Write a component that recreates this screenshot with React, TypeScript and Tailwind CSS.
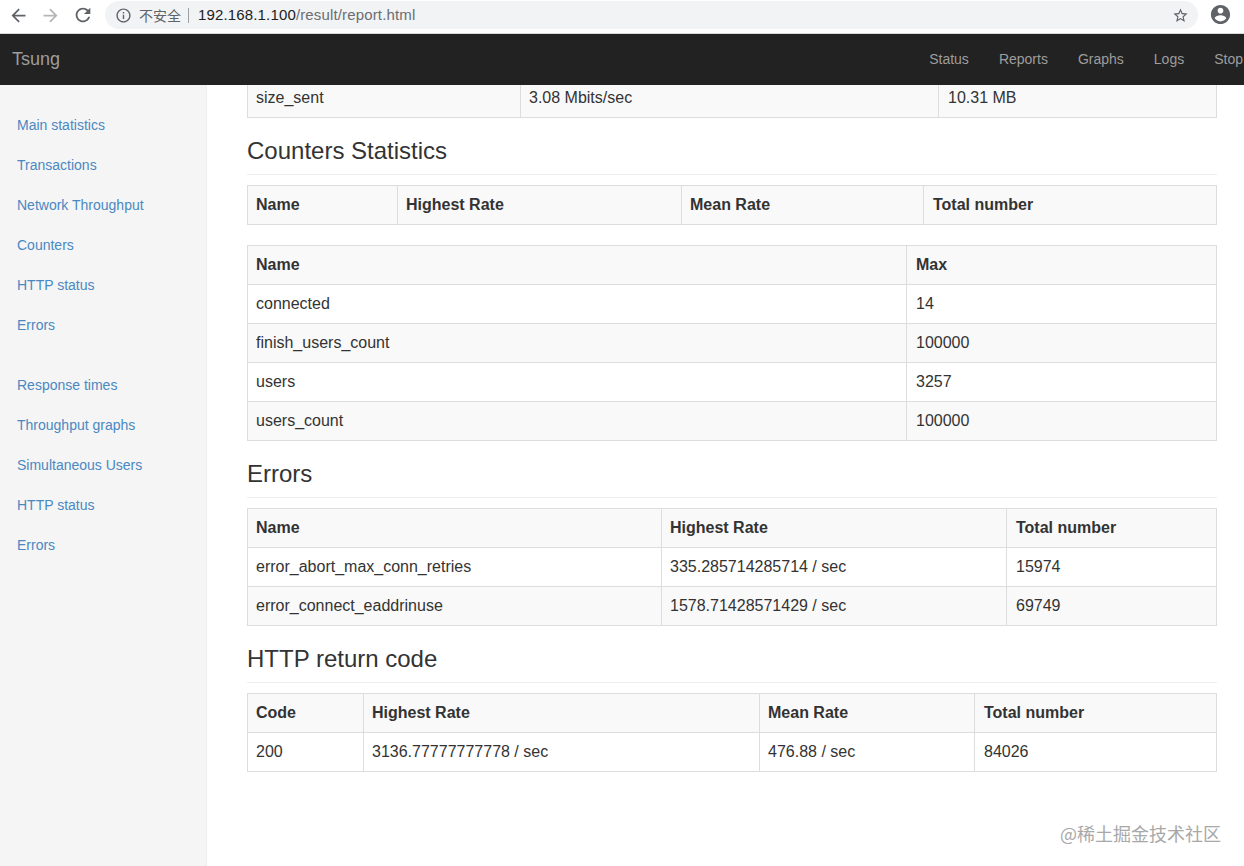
const FONT = "font-['Liberation_Sans',Arial,sans-serif]";

interface DataTableProps {
  cols: string[];
  rows: string[][];
  className?: string;
}

function Glyph({ d, className }: { d: string; className: string }) {
  return (
    <svg viewBox="0 0 24 24" className={className} fill="currentColor">
      <path d={d} />
    </svg>
  );
}

const ICONS = {
  back: 'M20 11H7.83l5.59-5.59L12 4l-8 8 8 8 1.41-1.41L7.83 13H20v-2z',
  forward: 'M12 4l-1.41 1.41L16.17 11H4v2h12.17l-5.58 5.59L12 20l8-8z',
  reload:
    'M17.65 6.35C16.2 4.9 14.21 4 12 4c-4.42 0-7.99 3.58-7.99 8s3.57 8 7.99 8c3.73 0 6.84-2.55 7.73-6h-2.08c-.82 2.33-3.04 4-5.65 4-3.31 0-6-2.69-6-6s2.69-6 6-6c1.66 0 3.14.69 4.22 1.78L13 11h7V4l-2.35 2.35z',
  info: 'M11 7h2v2h-2zm0 4h2v6h-2zm1-9C6.48 2 2 6.48 2 12s4.48 10 10 10 10-4.48 10-10S17.52 2 12 2zm0 18c-4.41 0-8-3.59-8-8s3.59-8 8-8 8 3.59 8 8-3.59 8-8 8z',
  star: 'M22 9.24l-7.19-.62L12 2 9.19 8.63 2 9.24l5.46 4.73L5.82 21 12 17.27 18.18 21l-1.63-7.03L22 9.24zM12 15.4l-3.76 2.27 1-4.28-3.32-2.88 4.38-.38L12 6.1l1.71 4.04 4.38.38-3.32 2.88 1 4.28L12 15.4z',
  account:
    'M12 2C6.48 2 2 6.48 2 12s4.48 10 10 10 10-4.48 10-10S17.52 2 12 2zm0 3c1.66 0 3 1.34 3 3s-1.34 3-3 3-3-1.34-3-3 1.34-3 3-3zm0 14.2c-2.5 0-4.71-1.28-6-3.22.03-1.99 4-3.08 6-3.08 1.99 0 5.97 1.09 6 3.08-1.29 1.94-3.5 3.22-6 3.22z',
};

function BrowserBar() {
  return (
    <div className="flex h-[34px] items-start bg-white border-b border-[#d8d8d8]">
      <div className="flex items-center h-[30px] w-[105px] text-[#5f6368]">
        <Glyph d={ICONS.back} className="ml-[8px] w-[21px] h-[21px]" />
        <Glyph d={ICONS.forward} className="ml-[11px] w-[21px] h-[21px] text-[#b4b6b9]" />
        <Glyph d={ICONS.reload} className="ml-[11px] w-[22px] h-[22px]" />
      </div>
      <div className="flex items-center h-[28px] mt-[1px] w-[1093px] rounded-full bg-[#f1f3f4]">
        <Glyph d={ICONS.info} className="ml-[10px] w-[17px] h-[17px] text-[#5f6368]" />
        <span className="ml-[7px] text-[14px] text-[#5f6368] font-['Noto_Sans_CJK_SC',sans-serif]">不安全</span>
        <span className="ml-[7px] h-[15px] w-px bg-[#9aa0a6]" />
        <span className="ml-[9px] text-[15px] tracking-[0.15px] text-[#6b6e72]">
          <span className="text-[#202124]">192.168.1.100</span>/result/report.html
        </span>
        <Glyph d={ICONS.star} className="ml-auto mr-[9px] w-[17px] h-[17px] text-[#5f6368]" />
      </div>
      <Glyph d={ICONS.account} className="ml-[11px] mt-[3px] w-[23px] h-[23px] text-[#5f6368]" />
    </div>
  );
}

function TopNav() {
  return (
    <div className="flex items-center h-[51px] bg-[#222] text-[#9d9d9d]">
      <span className="ml-[12px] text-[18px]">Tsung</span>
      <div className="ml-auto pr-[1px] flex gap-[30px] text-[14px]">
        <span>Status</span>
        <span>Reports</span>
        <span>Graphs</span>
        <span>Logs</span>
        <span>Stop</span>
      </div>
    </div>
  );
}

function Sidebar() {
  const first = ['Main statistics', 'Transactions', 'Network Throughput', 'Counters', 'HTTP status', 'Errors'];
  const second = ['Response times', 'Throughput graphs', 'Simultaneous Users', 'HTTP status', 'Errors'];
  return (
    <div className="w-[207px] shrink-0 bg-[#f5f5f5] border-r border-[#eee] pt-[20px] text-[14px] leading-[20px] text-[#4a88c2]">
      {first.map((s) => (
        <div key={s} className="px-[17px] py-[10px]">{s}</div>
      ))}
      <div className="h-[20px]" />
      {second.map((s) => (
        <div key={s} className="px-[17px] py-[10px]">{s}</div>
      ))}
    </div>
  );
}

function DataTable({ cols, rows, className = '' }: DataTableProps) {
  return (
    <table className={`w-[969px] table-fixed border-collapse text-[16px] leading-[22px] ${className}`}>
      <colgroup>
        {cols.map((w, i) => (
          <col key={i} style={{ width: w }} />
        ))}
      </colgroup>
      <tbody>
        {rows.map((row, r) => (
          <tr key={r} className={r % 2 === 0 ? 'bg-[#f9f9f9]' : 'bg-white'}>
            {row.map((cell, c) => (
              <td key={c} className="h-[39px] pl-[8px] last:pl-[9px] pr-[8px] py-0 border border-[#ddd]">{cell}</td>
            ))}
          </tr>
        ))}
      </tbody>
    </table>
  );
}

function HeadTable({ cols, head, rows }: { cols: string[]; head: string[]; rows: string[][] }) {
  return (
    <table className="w-[969px] table-fixed border-collapse text-[16px] leading-[22px]">
      <colgroup>
        {cols.map((w, i) => (
          <col key={i} style={{ width: w }} />
        ))}
      </colgroup>
      <thead>
        <tr className="bg-[#f9f9f9]">
          {head.map((h) => (
            <th key={h} className="h-[39px] pl-[8px] last:pl-[9px] pr-[8px] py-0 border border-[#ddd] text-left font-bold">{h}</th>
          ))}
        </tr>
      </thead>
      {rows.length > 0 && (
        <tbody>
          {rows.map((row, r) => (
            <tr key={r} className={r % 2 === 1 ? 'bg-[#f9f9f9]' : 'bg-white'}>
              {row.map((cell, c) => (
                <td key={c} className="h-[39px] pl-[8px] last:pl-[9px] pr-[8px] py-0 border border-[#ddd]">{cell}</td>
              ))}
            </tr>
          ))}
        </tbody>
      )}
    </table>
  );
}

function SectionTitle({ children }: { children: string }) {
  return (
    <h2 className="mt-[19px] mb-[10px] pb-[10px] border-b border-[#eee] text-[24px] leading-[27px] font-normal text-[#333]">
      {children}
    </h2>
  );
}

export default function App() {
  return (
    <div className={`relative h-[866px] w-[1244px] overflow-hidden bg-white text-[#333] ${FONT}`}>
      <BrowserBar />
      <TopNav />
      <div className="flex h-[781px]">
        <Sidebar />
        <div className="pl-[40px] overflow-hidden">
          <DataTable
            className="-mt-[7px]"
            cols={['273px', '418px', '278px']}
            rows={[['size_sent', '3.08 Mbits/sec', '10.31 MB']]}
          />
          <SectionTitle>Counters Statistics</SectionTitle>
          <HeadTable
            cols={['150px', '284px', '242px', '293px']}
            head={['Name', 'Highest Rate', 'Mean Rate', 'Total number']}
            rows={[]}
          />
          <div className="h-[20px]" />
          <HeadTable
            cols={['659px', '310px']}
            head={['Name', 'Max']}
            rows={[
              ['connected', '14'],
              ['finish_users_count', '100000'],
              ['users', '3257'],
              ['users_count', '100000'],
            ]}
          />
          <SectionTitle>Errors</SectionTitle>
          <HeadTable
            cols={['414px', '345px', '210px']}
            head={['Name', 'Highest Rate', 'Total number']}
            rows={[
              ['error_abort_max_conn_retries', '335.285714285714 / sec', '15974'],
              ['error_connect_eaddrinuse', '1578.71428571429 / sec', '69749'],
            ]}
          />
          <SectionTitle>HTTP return code</SectionTitle>
          <HeadTable
            cols={['116px', '396px', '215px', '242px']}
            head={['Code', 'Highest Rate', 'Mean Rate', 'Total number']}
            rows={[['200', '3136.77777777778 / sec', '476.88 / sec', '84026']]}
          />
        </div>
      </div>
      <span className="absolute left-[1060px] top-[822px] text-[18px] leading-[22px] text-[#a8a8a8] font-['Noto_Sans_CJK_SC',sans-serif]">
        @稀土掘金技术社区
      </span>
    </div>
  );
}
